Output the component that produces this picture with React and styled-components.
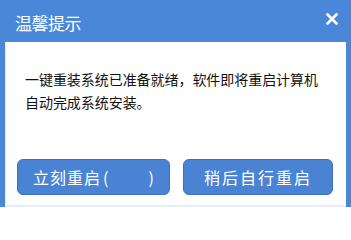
import React from 'react';
import styled, { createGlobalStyle } from 'styled-components';

const GlobalStyle = createGlobalStyle`
  html, body {
    margin: 0;
    padding: 0;
    background: #ffffff;
  }
  body {
    font-family: "Noto Sans CJK SC", "Noto Sans", sans-serif;
  }
`;

const Window = styled.div`
  width: 351px;
  height: 207px;
  box-sizing: border-box;
  background: #4a87d9;
  padding: 0 5px;
  display: flex;
  flex-direction: column;
`;

const TitleBar = styled.div`
  height: 42px;
  display: flex;
  align-items: center;
  justify-content: space-between;
  padding: 3px 6px 0 10px;
  box-sizing: border-box;
`;

const Title = styled.span`
  color: #ffffff;
  font-size: 17px;
  letter-spacing: -0.5px;
`;

const CloseButton = styled.button`
  width: 16px;
  height: 16px;
  padding: 0;
  margin-top: -8px;
  border: none;
  background: transparent;
  display: flex;
  align-items: center;
  justify-content: center;
  cursor: pointer;
`;

const Body = styled.div`
  flex: 1;
  background: #ffffff;
  border-left: 1px solid #e6eefa;
  border-bottom: 2px solid #e4edf9;
  display: flex;
  flex-direction: column;
  padding: 26px 0 10px 0;
  box-sizing: border-box;
`;

const Message = styled.p`
  margin: 0;
  padding-left: 19px;
  font-size: 14px;
  line-height: 23px;
  color: #111111;
  letter-spacing: -0.05px;
`;

const ButtonRow = styled.div`
  margin-top: auto;
  display: flex;
  gap: 13px;
  padding-left: 11px;
`;

const ActionButton = styled.button`
  width: ${p => p.$width}px;
  height: 36px;
  border: 1px solid #3d6fc0;
  border-radius: 6px;
  background: #4b83d4;
  color: #ffffff;
  font-family: "Noto Sans CJK SC", "Noto Sans", sans-serif;
  font-size: 16px;
  letter-spacing: ${p => p.$spacing}px;
  padding: 0;
  display: flex;
  align-items: center;
  justify-content: center;
  cursor: pointer;
`;

const Paren = styled.span`
  letter-spacing: 0;
  padding: ${p => (p.$open ? '0 40px 0 2px' : '0')};
`;

const App = () => {
  return (
    <>
      <GlobalStyle />
      <Window>
        <TitleBar>
          <Title>温馨提示</Title>
          <CloseButton aria-label="关闭">
            <svg width="12" height="12" viewBox="0 0 12 12">
              <path d="M1.5 1.5 L10.5 10.5 M10.5 1.5 L1.5 10.5" stroke="#ffffff" strokeWidth="2.6" strokeLinecap="round" />
            </svg>
          </CloseButton>
        </TitleBar>
        <Body>
          <Message>
            一键重装系统已准备就绪，软件即将重启计算机
            <br />
            自动完成系统安装。
          </Message>
          <ButtonRow>
            <ActionButton $width={153} $spacing={1}>
              立刻重启<Paren $open>(</Paren><Paren>)</Paren>
            </ActionButton>
            <ActionButton $width={150} $spacing={2}>
              稍后自行重启
            </ActionButton>
          </ButtonRow>
        </Body>
      </Window>
    </>
  );
};

export default App;
